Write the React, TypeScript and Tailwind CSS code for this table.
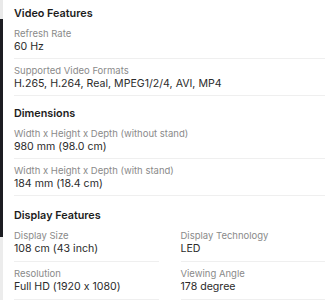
import React from "react";

type Item = { label: string; value: string };

function Row({ item, pb = "pb-[4px]" }: { item: Item; pb?: string }) {
  return (
    <div className={`border-b border-[#efefef] pt-[6px] ${pb}`}>
      <div className="text-[9.5px] leading-[12px] text-[#8a8a8a]">{item.label}</div>
      <div className="text-[10.6px] leading-[14px] text-[#2b2b2b]">{item.value}</div>
    </div>
  );
}

function Section({
  title,
  items,
  cols = 1,
  className = "",
  pb,
}: {
  title: string;
  items: Item[];
  cols?: number;
  className?: string;
  pb?: string;
}) {
  return (
    <div className={className}>
      <div className="text-[10.8px] leading-[16px] font-semibold text-[#1c1c1c]">{title}</div>
      <div className={cols === 2 ? "grid grid-cols-2 gap-x-[22px]" : "flex flex-col"}>
        {items.map((it) => (
          <Row key={it.label} item={it} pb={pb} />
        ))}
      </div>
    </div>
  );
}

export default function App() {
  return (
    <div
      className="flex w-[333px] h-[300px] overflow-hidden bg-white [font-feature-settings:'calt'_0]"
      style={{ fontFamily: "Inter, 'Noto Sans', sans-serif" }}
    >
      <div className="flex w-[3px] shrink-0 flex-col">
        <div className="h-[19px] bg-[#e9e9e9]" />
        <div className="h-[218px] bg-[#1c1d22]" />
        <div className="flex-1 bg-[#ececec]" />
      </div>
      <div className="flex-1 pl-[11px] pr-[8px] pt-[6px]">
        <Section
          title="Video Features"
          items={[
            { label: "Refresh Rate", value: "60 Hz" },
            { label: "Supported Video Formats", value: "H.265, H.264, Real, MPEG1/2/4, AVI, MP4" },
          ]}
        />
        <Section
          className="mt-[10px]"
          title="Dimensions"
          items={[
            { label: "Width x Height x Depth (without stand)", value: "980 mm (98.0 cm)" },
            { label: "Width x Height x Depth (with stand)", value: "184 mm (18.4 cm)" },
          ]}
        />
        <Section
          className="mt-[12px]"
          title="Display Features"
          cols={2}
          pb="pb-[5px]"
          items={[
            { label: "Display Size", value: "108 cm (43 inch)" },
            { label: "Display Technology", value: "LED" },
            { label: "Resolution", value: "Full HD (1920 x 1080)" },
            { label: "Viewing Angle", value: "178 degree" },
          ]}
        />
      </div>
    </div>
  );
}
